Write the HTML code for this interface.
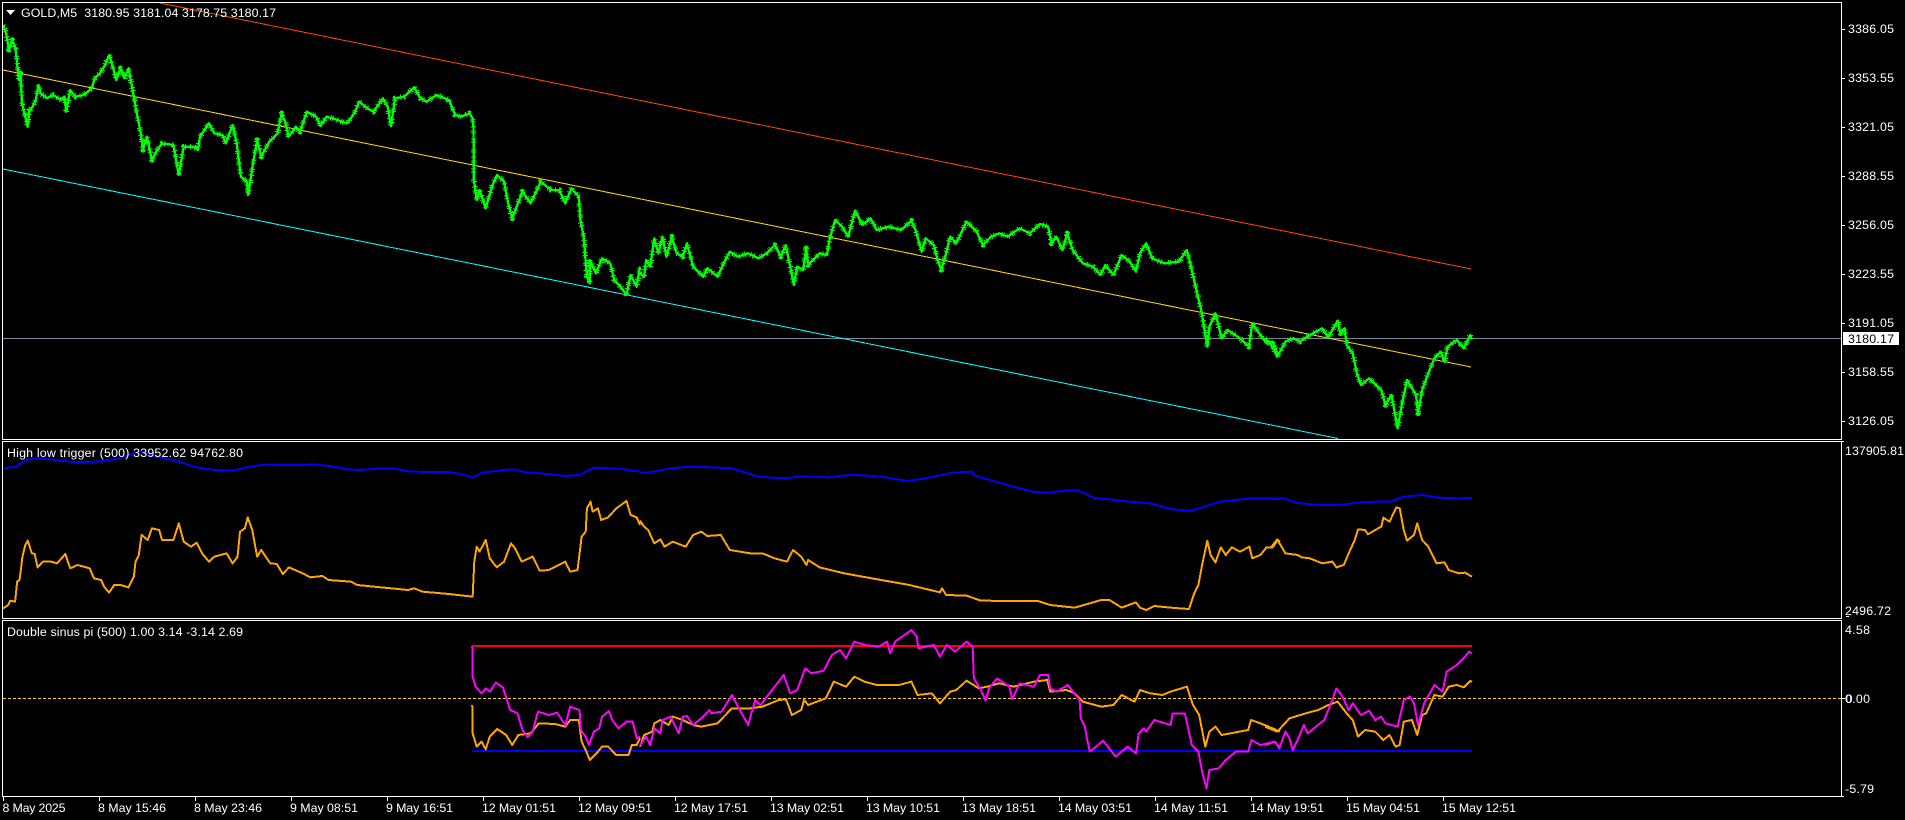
<!DOCTYPE html>
<html><head><meta charset="utf-8"><title>GOLD,M5</title>
<style>
html,body{margin:0;padding:0;background:#000;width:1905px;height:820px;overflow:hidden}
svg{display:block}
text{font-family:"Liberation Sans",sans-serif;font-size:12.4px;fill:#fff}
polyline{fill:none;vector-effect:non-scaling-stroke;stroke-linejoin:round}
.g{stroke:#00ff00;stroke-width:2.4}
.gf{stroke:#00ff00;stroke-width:5.5;stroke-dasharray:1 3 1 1 1 5 1 2 1 7 1 1 1 4}
.o{stroke:#ffa500;stroke-width:2}
.b{stroke:#0000ff;stroke-width:2}
.m{stroke:#ff00ff;stroke-width:2}
</style></head><body>
<svg width="1905" height="820" viewBox="0 0 1905 820" xmlns="http://www.w3.org/2000/svg">
<rect width="1905" height="820" fill="#000"/>
<defs>
<clipPath id="c1"><rect x="3" y="3" width="1838" height="436"/></clipPath>
<polyline id="g1" points="8,75 15,100 22,150 30,120 38,145 42,190 46,240 50,220 54,310 62,350 68,380 72,330 80,320 88,300 94,255 100,280 115,295 130,285 150,300 158,290 162,335 172,270 185,290 205,285 225,265 232,235 245,220 255,200 268,165 275,195 285,240 295,205 305,235 315,205 325,270 332,320 345,400 350,450 360,410 372,480 385,450 397,430 425,435 438,525 450,440 475,440 485,450 490,410 512,370 525,400 545,405 553,430 570,375 580,430 590,530 605,545 608,585 620,490 630,420 640,470 660,425 680,400 690,340 700,370 707,410 725,380 735,395 752,335 775,350 785,378 800,350 815,355 850,370 868,340 880,305 900,325 915,335 938,295 950,320 958,378 968,295 990,290 1015,262 1030,295 1045,305 1070,285 1100,300 1115,345 1130,350 1150,340 1158,355 1160,380 1161,540 1168,600 1175,570 1190,625 1205,560 1218,525 1235,545 1245,610 1255,655 1280,575 1300,610 1325,545 1350,570 1370,570 1385,610 1400,565 1418,590 1422,660 1430,710 1438,830 1445,850 1445,780 1460,820 1475,775 1495,790 1505,840 1520,860 1535,885 1545,825 1560,860 1568,800"/>
<polyline id="g2" points="0,820 10,830 15,780 25,800 35,715 45,760 55,710 65,770 78,710 90,760 105,770 115,730 130,800 155,830 165,805 190,830 205,790 220,755 240,770 265,760 290,775 310,760 330,735 345,770 357,735 368,800 377,855 385,800 400,810 407,745 412,795 440,760 458,765 465,715 478,660 495,680 510,710 527,632 545,675 565,655 580,690 610,680 640,690 665,662 675,690 690,755 700,715 720,735 728,775 738,810 750,760 760,710 775,730 800,665 825,695 840,735 860,710 880,700 900,710 930,685 955,700 980,672 1000,680 1008,730 1020,710 1035,750 1047,700 1060,750 1085,790 1110,800 1128,825 1140,795 1160,825 1180,765 1200,785 1215,815 1225,760 1240,730 1255,775 1285,790 1320,785 1340,750 1350,800 1365,880 1375,930 1390,1040 1395,980 1410,940 1425,1015 1440,990 1470,1015 1492,1040 1500,970 1520,1005 1535,1030 1550,1025 1565,1070"/>
<polyline id="g3" points="0,1015 15,1035 30,1070 50,1025 70,1015 85,1025 110,1005 140,985 155,1012 178,962 185,1000 195,985 200,1035 215,1060 225,1120 235,1155 255,1135 285,1170 295,1215 310,1185 325,1285 335,1215 348,1140 370,1185 375,1240 385,1170 400,1120 415,1075 430,1055 440,1085 447,1040 470,1020 487,1045 503,1005 507,1018"/>
</defs>
<g clip-path="url(#c1)" shape-rendering="crispEdges">
<line x1="3" y1="338.5" x2="1841" y2="338.5" stroke="#778899"/>
<line x1="160" y1="3" x2="1471" y2="269" stroke="#ff4500"/>
<line x1="3" y1="70" x2="1471" y2="367" stroke="#ffd700"/>
<line x1="3" y1="169" x2="1338" y2="438.5" stroke="#00ffff"/>
<g transform="scale(0.40816,0.33333)"><use href="#g1" class="g"/><use href="#g1" class="gf"/></g>
<g transform="translate(640,0) scale(0.40816,0.33333)"><use href="#g2" class="g"/><use href="#g2" class="gf"/></g>
<g transform="translate(1265,0) scale(0.40816,0.33333)"><use href="#g3" class="g"/><use href="#g3" class="gf"/></g>
</g>

<g shape-rendering="crispEdges">
<g transform="translate(0,430) scale(0.40816,0.33333)">
<polyline class="b" points="8,115 40,110 60,92 85,85 115,87 150,92 180,96 245,95 290,85 340,65 385,80 430,92 480,112 525,120 570,122 610,110 650,104 700,105 770,104 810,108 850,118 880,120 935,115 970,116 1000,125 1100,126 1130,132 1157,143 1180,128 1250,118 1265,118 1285,127 1325,130 1385,138 1420,135 1455,113 1520,116 1568,125"/>
<polyline class="o" points="8,535 20,525 25,512 37,515 42,455 48,450 55,380 62,345 68,332 78,370 85,372 92,412 105,395 125,395 140,400 160,372 172,415 190,405 220,415 230,445 248,450 255,470 267,488 280,465 295,465 315,472 328,440 332,395 340,375 347,315 362,330 372,295 390,300 397,330 425,330 438,280 450,335 468,350 482,338 495,370 512,395 525,380 555,370 570,400 582,380 588,305 600,295 607,262 618,300 630,380 640,360 662,400 678,402 693,432 708,412 745,432 760,442 790,438 805,450 860,455 875,465 900,468 1000,480 1015,475 1035,485 1100,492 1158,500 1162,395 1168,350 1175,365 1190,330 1200,385 1217,412 1235,395 1252,340 1262,355 1278,395 1305,380 1322,422 1345,420 1385,395 1397,425 1415,420 1425,320 1435,305 1438,235 1447,215 1452,245 1465,235 1473,270 1490,262 1510,235 1535,213 1545,255 1560,262 1568,285"/>
</g>
<g transform="translate(640,430) scale(0.40816,0.33333)">
<polyline class="b" points="0,127 20,128 80,114 130,110 175,112 225,115 290,140 350,145 400,139 460,142 520,134 590,140 655,153 700,145 765,128 812,125 820,137 900,165 960,185 1000,188 1040,182 1075,182 1110,203 1200,215 1250,220 1300,237 1350,243 1420,215 1500,205 1568,207"/>
<polyline class="o" points="0,272 10,290 20,300 35,340 50,328 60,350 80,335 112,350 130,315 150,305 165,318 198,315 220,360 270,370 300,370 330,385 360,395 375,360 395,380 408,405 412,390 440,412 500,430 600,452 660,465 735,487 740,475 750,495 800,497 835,512 930,513 975,513 1005,525 1065,533 1130,510 1150,510 1180,533 1215,517 1225,533 1240,540 1260,528 1300,533 1345,537 1358,490 1368,465 1378,400 1390,332 1398,375 1410,397 1423,352 1435,375 1450,352 1470,365 1493,350 1500,385 1520,375 1535,352 1550,352 1563,330 1568,335"/>
</g>
<g transform="translate(1265,430) scale(0.40816,0.33333)">
<polyline class="b" points="0,205 50,206 75,218 130,225 180,225 240,216 310,214 340,200 385,195 425,203 470,205 507,204"/>
<polyline class="o" points="0,352 15,352 30,328 50,370 80,375 90,382 110,385 140,400 165,395 175,412 193,405 205,370 220,330 228,298 245,300 252,313 270,300 285,290 290,263 305,275 322,232 330,235 340,300 348,332 365,315 373,280 385,330 400,350 420,400 440,397 450,420 475,430 490,428 507,440"/>
</g>

<line x1="3" y1="698.5" x2="1841" y2="698.5" stroke="#ffd700" stroke-dasharray="3 2"/>
<rect x="472" y="645" width="1000" height="2" fill="#ff0000"/>
<rect x="472" y="750" width="1000" height="2" fill="#0000ff"/>

<g transform="translate(0,430) scale(0.40816,0.33333)">
<polyline class="o" points="1157,825 1158,910 1168,950 1180,935 1190,958 1200,920 1218,897 1240,915 1255,945 1270,915 1300,910 1320,880 1360,882 1385,890 1397,870 1418,870 1425,935 1435,960 1445,990 1465,965 1475,950 1490,950 1510,975 1540,975 1548,945 1560,945 1568,925"/>
<polyline class="m" points="1157,648 1158,740 1165,770 1180,790 1190,775 1200,785 1215,758 1232,772 1250,840 1268,850 1280,900 1293,922 1305,905 1318,845 1345,855 1365,848 1385,885 1397,830 1420,840 1423,900 1435,920 1443,945 1455,905 1468,895 1475,860 1492,843 1500,870 1515,895 1535,875 1550,875 1560,925 1568,920"/>
</g>
<g transform="translate(640,430) scale(0.40816,0.33333)">
<polyline class="o" points="0,950 10,915 30,905 35,880 50,870 70,885 80,860 105,870 130,885 150,890 190,880 225,835 270,835 300,830 340,810 358,808 372,855 395,840 402,810 412,825 455,805 475,755 505,770 525,740 550,755 580,765 635,765 665,755 680,795 715,790 735,820 760,785 775,780 800,752 830,775 850,770 880,760 915,770 965,755 998,750 1005,785 1045,780 1065,790 1085,815 1130,830 1160,825 1180,795 1212,815 1225,780 1250,790 1280,795 1300,785 1340,770 1355,825 1370,855 1385,950 1395,905 1410,890 1425,915 1490,900 1497,870 1520,880 1550,895 1568,905"/>
<polyline class="m" points="0,945 15,920 25,945 35,895 50,910 55,870 75,860 95,910 105,860 115,858 130,885 155,860 170,840 175,850 200,845 225,795 240,830 265,885 282,810 295,825 330,770 352,735 368,790 385,780 405,715 420,730 450,722 470,675 490,660 505,685 525,635 550,645 585,650 605,635 613,670 625,635 665,600 678,620 682,655 720,645 735,680 752,645 772,665 800,635 815,650 818,745 835,780 847,812 855,775 875,745 905,770 912,808 930,760 965,770 980,735 1000,735 1005,775 1020,785 1048,765 1077,810 1080,865 1090,890 1095,925 1102,965 1135,932 1165,980 1195,950 1215,970 1222,910 1235,895 1240,905 1260,870 1300,885 1305,850 1335,850 1352,945 1368,965 1378,1030 1388,1075 1395,1020 1418,1015 1435,990 1460,965 1490,965 1498,930 1520,945 1555,935 1568,955"/>
</g>
<g transform="translate(1265,430) scale(0.40816,0.33333)">
<polyline class="o" points="0,890 30,905 60,865 100,850 130,840 155,825 178,815 200,850 215,870 228,920 245,900 270,905 290,930 305,915 320,950 330,945 340,875 360,870 373,915 385,855 395,850 415,795 435,800 450,770 470,765 487,772 503,753 507,755"/>
<polyline class="m" points="0,945 25,935 35,955 50,905 60,925 68,960 80,930 95,885 105,910 145,870 160,825 175,775 190,800 205,840 215,820 235,855 255,842 270,870 285,860 295,880 325,890 340,810 355,800 365,820 375,885 390,820 415,765 435,785 445,725 470,705 490,680 500,665 507,670"/>
</g>

<!-- frames -->
<g fill="none" stroke="#fff">
<rect x="2.5" y="2.5" width="1839" height="437"/>
<rect x="2.5" y="441.5" width="1839" height="177"/>
<rect x="2.5" y="620.5" width="1839" height="176"/>
</g>

<!-- right axis ticks -->
<g stroke="#fff">
<line x1="1842" x2="1845" y1="29.5" y2="29.5"/><line x1="1842" x2="1845" y1="78.5" y2="78.5"/>
<line x1="1842" x2="1845" y1="127.5" y2="127.5"/><line x1="1842" x2="1845" y1="176.5" y2="176.5"/>
<line x1="1842" x2="1845" y1="225.5" y2="225.5"/><line x1="1842" x2="1845" y1="274.5" y2="274.5"/>
<line x1="1842" x2="1845" y1="323.5" y2="323.5"/><line x1="1842" x2="1845" y1="372.5" y2="372.5"/>
<line x1="1842" x2="1845" y1="421.5" y2="421.5"/><line x1="1842" x2="1845" y1="698.5" y2="698.5"/>
<line x1="1842" x2="1844" y1="441.5" y2="441.5"/><line x1="1842" x2="1844" y1="796.5" y2="796.5"/>
</g>
<!-- time ticks -->
<g stroke="#fff">
<line x1="3.5" x2="3.5" y1="797" y2="801"/><line x1="99.5" x2="99.5" y1="797" y2="801"/>
<line x1="195.5" x2="195.5" y1="797" y2="801"/><line x1="291.5" x2="291.5" y1="797" y2="801"/>
<line x1="387.5" x2="387.5" y1="797" y2="801"/><line x1="483.5" x2="483.5" y1="797" y2="801"/>
<line x1="579.5" x2="579.5" y1="797" y2="801"/><line x1="675.5" x2="675.5" y1="797" y2="801"/>
<line x1="771.5" x2="771.5" y1="797" y2="801"/><line x1="867.5" x2="867.5" y1="797" y2="801"/>
<line x1="963.5" x2="963.5" y1="797" y2="801"/><line x1="1059.5" x2="1059.5" y1="797" y2="801"/>
<line x1="1155.5" x2="1155.5" y1="797" y2="801"/><line x1="1251.5" x2="1251.5" y1="797" y2="801"/>
<line x1="1347.5" x2="1347.5" y1="797" y2="801"/><line x1="1443.5" x2="1443.5" y1="797" y2="801"/>
</g>
<rect x="1843" y="332" width="56" height="13" fill="#fff"/>
<rect x="1846" y="616" width="3" height="1" fill="#fff"/>
</g>

<polygon points="6,10 15,10 10.5,15" fill="#fff"/>
<text x="21" y="17" textLength="255">GOLD,M5&#160;&#160;3180.95 3181.04 3178.75 3180.17</text>
<text x="7" y="457" textLength="236">High low trigger (500) 33952.62 94762.80</text>
<text x="7" y="636" textLength="236">Double sinus pi (500) 1.00 3.14 -3.14 2.69</text>

<text x="1848" y="33" textLength="46">3386.05</text>
<text x="1848" y="82" textLength="46">3353.55</text>
<text x="1848" y="131" textLength="46">3321.05</text>
<text x="1848" y="180" textLength="46">3288.55</text>
<text x="1848" y="229" textLength="46">3256.05</text>
<text x="1848" y="278" textLength="46">3223.55</text>
<text x="1848" y="327" textLength="46">3191.05</text>
<text x="1848" y="343" textLength="46" style="fill:#000">3180.17</text>
<text x="1848" y="376" textLength="46">3158.55</text>
<text x="1848" y="425" textLength="46">3126.05</text>
<text x="1845" y="455" textLength="59">137905.81</text>
<text x="1845" y="615" textLength="46">2496.72</text>
<text x="1845" y="634" textLength="25">4.58</text>
<text x="1845" y="703" textLength="25">0.00</text>
<text x="1845.6" y="703" textLength="7">0</text>
<text x="1845" y="793" textLength="29">-5.79</text>

<text x="2.5" y="812" textLength="63">8 May 2025</text>
<text x="98" y="812" textLength="68">8 May 15:46</text>
<text x="194" y="812" textLength="68">8 May 23:46</text>
<text x="290" y="812" textLength="68">9 May 08:51</text>
<text x="386" y="812" textLength="67">9 May 16:51</text>
<text x="482" y="812" textLength="74">12 May 01:51</text>
<text x="578" y="812" textLength="74">12 May 09:51</text>
<text x="674" y="812" textLength="74">12 May 17:51</text>
<text x="770" y="812" textLength="74">13 May 02:51</text>
<text x="866" y="812" textLength="74">13 May 10:51</text>
<text x="962" y="812" textLength="74">13 May 18:51</text>
<text x="1058" y="812" textLength="74">14 May 03:51</text>
<text x="1154" y="812" textLength="74">14 May 11:51</text>
<text x="1250" y="812" textLength="74">14 May 19:51</text>
<text x="1346" y="812" textLength="74">15 May 04:51</text>
<text x="1442" y="812" textLength="74">15 May 12:51</text>
</svg>
</body></html>
